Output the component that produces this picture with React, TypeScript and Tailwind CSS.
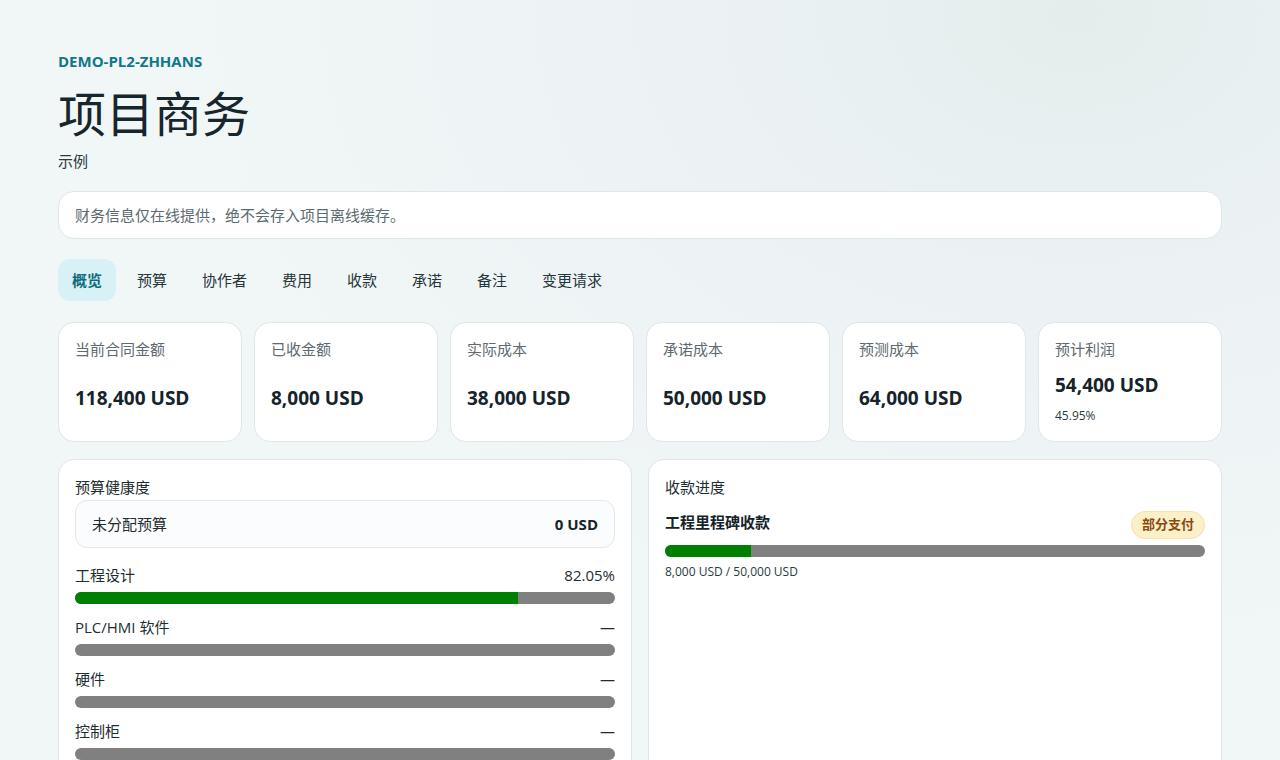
import React from "react";

const font = { fontFamily: '"Open Sans", "Noto Sans CJK SC", sans-serif' };

const stats = [
  { label: "当前合同金额", value: "118,400 USD" },
  { label: "已收金额", value: "8,000 USD" },
  { label: "实际成本", value: "38,000 USD" },
  { label: "承诺成本", value: "50,000 USD" },
  { label: "预测成本", value: "64,000 USD" },
];

const tabs = ["概览", "预算", "协作者", "费用", "收款", "承诺", "备注", "变更请求"];

const budget = [
  { name: "工程设计", pct: 82.05, text: "82.05%" },
  { name: "PLC/HMI 软件", pct: 0, text: "—" },
  { name: "硬件", pct: 0, text: "—" },
  { name: "控制柜", pct: 0, text: "—" },
];

export default function App() {
  return (
    <div
      style={font}
      className="min-h-[760px] w-full bg-[#f1f6f7] bg-[radial-gradient(ellipse_at_84%_2%,#e4ecec_0%,#e9f0f1_14%,#edf3f4_32%,#f1f6f7_60%)] text-[#1b2a30] px-[58px] pt-[51px] overflow-hidden"
    >
      <div className="text-[15px] leading-[20px] font-bold text-[#0f7889]">DEMO-PL2-ZHHANS</div>
      <h1 className="mt-[15px] text-[48px] leading-[56px] font-normal text-[#17262c]">项目商务</h1>
      <div className="mt-[9px] text-[15px] leading-[20px] text-[#2a3a40]">示例</div>

      <div className="mt-[20px] h-[48px] rounded-2xl border border-[#dde6e9] bg-white px-4 flex items-center text-[15px] text-[#5c6b70]">
        财务信息仅在线提供，绝不会存入项目离线缓存。
      </div>

      <div className="mt-[20px] flex gap-[7px]">
        {tabs.map((t, i) => (
          <div
            key={t}
            className={
              i === 0
                ? "h-[42px] px-[14px] rounded-xl bg-[#d8f1f6] text-[#0d6c7b] font-semibold text-[15px] flex items-center"
                : "h-[42px] px-[14px] rounded-xl text-[#26353b] text-[15px] flex items-center"
            }
          >
            {t}
          </div>
        ))}
      </div>

      <div className="mt-[21px] grid grid-cols-6 gap-3">
        {stats.map((s) => (
          <div key={s.label} className="h-[120px] rounded-2xl border border-[#dde6e9] bg-white px-4 pt-[15px]">
            <div className="text-[15px] leading-[22px] text-[#5e6a6f]">{s.label}</div>
            <div className="mt-[24px] text-[19px] leading-[28px] font-bold text-[#15232a]">{s.value}</div>
          </div>
        ))}
        <div className="h-[120px] rounded-2xl border border-[#dde6e9] bg-white px-4 pt-[15px]">
          <div className="text-[15px] leading-[22px] text-[#5e6a6f]">预计利润</div>
          <div className="mt-[11px] text-[19px] leading-[28px] font-bold text-[#15232a]">54,400 USD</div>
          <div className="mt-[8px] text-[12px] leading-[18px] text-[#2a3a40]">45.95%</div>
        </div>
      </div>

      <div className="mt-[17px] grid grid-cols-2 gap-4">
        <div className="h-[320px] rounded-2xl border border-[#dde6e9] bg-white px-4 pt-[17px]">
          <div className="text-[15px] leading-[20px] text-[#1e2d33]">预算健康度</div>
          <div className="mt-[3px] h-[48px] rounded-xl border border-[#dfe7ea] bg-[#fbfcfd] px-4 flex items-center justify-between">
            <span className="text-[15px] text-[#1e2d33]">未分配预算</span>
            <span className="text-[15px] font-bold text-[#15232a]">0 USD</span>
          </div>
          <div className="mt-[17px] flex flex-col gap-[13px]">
            {budget.map((b) => (
              <div key={b.name}>
                <div className="flex justify-between text-[15px] leading-[20px] text-[#1e2d33]">
                  <span>{b.name}</span>
                  <span>{b.text}</span>
                </div>
                <div className="mt-[7px] h-[12px] rounded-full bg-[#808080] overflow-hidden">
                  <div className="h-full bg-[#008000]" style={{ width: `${b.pct}%` }} />
                </div>
              </div>
            ))}
          </div>
        </div>

        <div className="h-[320px] rounded-2xl border border-[#dde6e9] bg-white px-4 pt-[17px]">
          <div className="text-[15px] leading-[20px] text-[#1e2d33]">收款进度</div>
          <div className="mt-[14px] flex items-start justify-between">
            <span className="mt-[1px] text-[15px] leading-[20px] font-bold text-[#15232a]">工程里程碑收款</span>
            <span className="h-[28px] px-[10px] rounded-full bg-[#fcf0c9] border border-[#f5e3b0] text-[13px] font-bold text-[#8a4a12] flex items-center">
              部分支付
            </span>
          </div>
          <div className="mt-[6px] h-[12px] rounded-full bg-[#808080] overflow-hidden">
            <div className="h-full bg-[#008000]" style={{ width: "16%" }} />
          </div>
          <div className="mt-[6px] text-[12px] leading-[18px] text-[#2a3a40]">8,000 USD / 50,000 USD</div>
        </div>
      </div>
    </div>
  );
}
